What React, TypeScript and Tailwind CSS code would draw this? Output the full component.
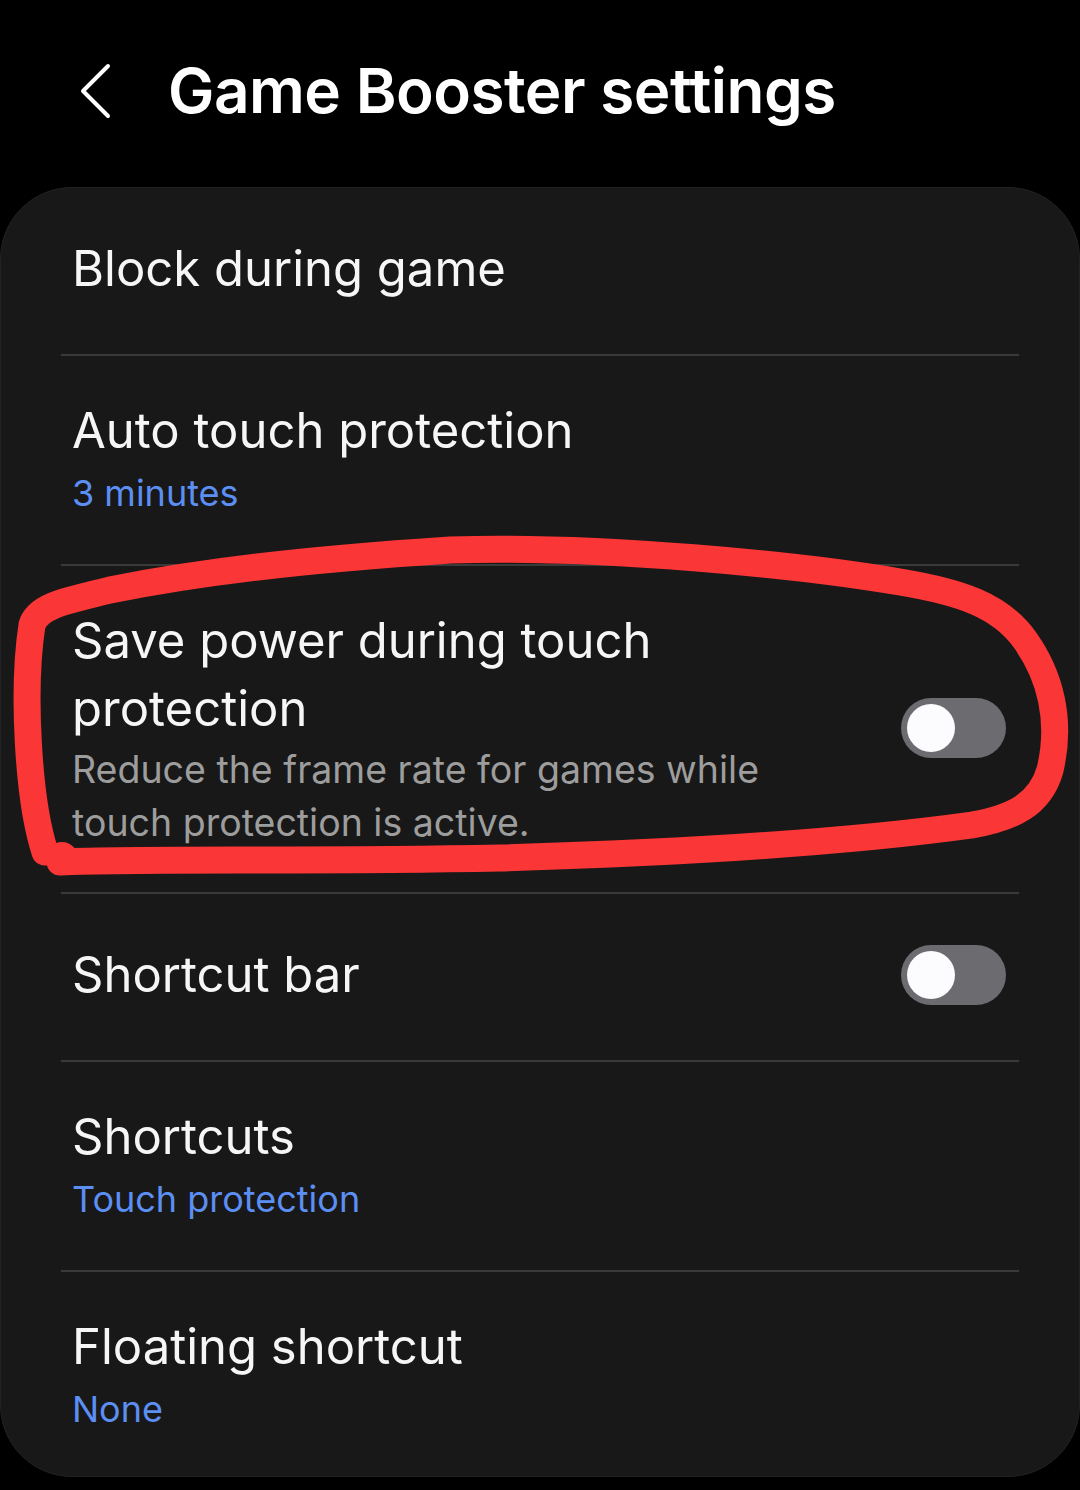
import { useState } from "react";

type Row = {
  title: string;
  sub?: string;
  desc?: string;
  toggle?: boolean;
};

const rows: Row[] = [
  { title: "Block during game" },
  { title: "Auto touch protection", sub: "3 minutes" },
  {
    title: "Save power during touch protection",
    desc: "Reduce the frame rate for games while touch protection is active.",
    toggle: true,
  },
  { title: "Shortcut bar", toggle: true },
  { title: "Shortcuts", sub: "Touch protection" },
  { title: "Floating shortcut", sub: "None" },
];

function Toggle() {
  const [on, setOn] = useState(false);
  return (
    <button
      onClick={() => setOn(!on)}
      className={`flex h-[60px] w-[105px] shrink-0 items-center rounded-full px-[6px] ${on ? "justify-end bg-[#3e91ff]" : "justify-start bg-[#6b6b70]"}`}
    >
      <span className="h-[48px] w-[48px] rounded-full bg-[#fcfcfe]"></span>
    </button>
  );
}

function SettingRow({ row, last }: { row: Row; last: boolean }) {
  const single = !row.sub && !row.desc;
  return (
    <div
      className={`flex items-center justify-between gap-6 pl-[11px] pr-[13px] ${single ? "min-h-[166px] pb-[4px]" : last ? "pt-[41px] pb-[39px]" : "pt-[41px] pb-[43px]"}`}
    >
      <div className="flex flex-col">
        <p
          className={`text-[49px] leading-[68px] text-[#f6f6f6] ${row.toggle && row.desc ? "max-w-[620px]" : ""}`}
        >
          {row.title}
        </p>
        {row.sub && (
          <p className="text-[36px] leading-[56px] text-[#5c8ff3]">{row.sub}</p>
        )}
        {row.desc && (
          <p className="max-w-[720px] text-[37.5px] leading-[53px] text-[#9d9d9d]">
            {row.desc}
          </p>
        )}
      </div>
      {row.toggle && <Toggle />}
    </div>
  );
}

export default function App() {
  return (
    <div
      className="relative h-[1490px] w-[1080px] overflow-hidden bg-black"
      style={{ fontFamily: "Inter, 'Noto Sans', sans-serif" }}
    >
      <header className="flex h-[187px] items-center pb-[6px]">
        <button className="ml-[70px] mr-[50px] flex h-[60px] w-[48px] items-center justify-center text-white">
          <svg width="40" height="56" viewBox="0 0 40 56" fill="none">
            <path
              d="M34 3 L9 28 L34 53"
              stroke="currentColor"
              strokeWidth="4"
              strokeLinecap="round"
              strokeLinejoin="round"
            />
          </svg>
        </button>
        <h1 className="text-[62px] font-semibold tracking-[-0.5px] text-white">
          Game Booster settings
        </h1>
      </header>

      <div className="rounded-[72px] border border-[#222] bg-[#181818] px-[60px]">
        {rows.map((row, index) => (
          <div key={index}>
            {index > 0 && <div className="h-[2px] bg-[#3a3a3a]"></div>}
            <SettingRow row={row} last={index === rows.length - 1} />
          </div>
        ))}
      </div>

      <svg
        className="pointer-events-none absolute inset-0"
        width="1080"
        height="1490"
        viewBox="0 0 1080 1490"
        fill="none"
      >
        <path
          d="M45 852 C28 800, 22 690, 32 625 C38 605, 70 600, 110 590 C200 572, 300 560, 450 550 C600 545, 800 565, 900 582 C960 592, 1000 605, 1025 640 C1050 675, 1062 720, 1050 770 C1040 805, 1012 818, 972 825 C850 842, 700 852, 500 858 C300 862, 150 858, 60 862"
          stroke="#fb3636"
          strokeWidth="27"
          strokeLinecap="round"
          strokeLinejoin="round"
        />
        <circle cx="62" cy="858" r="16" fill="#fb3636" />
      </svg>
    </div>
  );
}
